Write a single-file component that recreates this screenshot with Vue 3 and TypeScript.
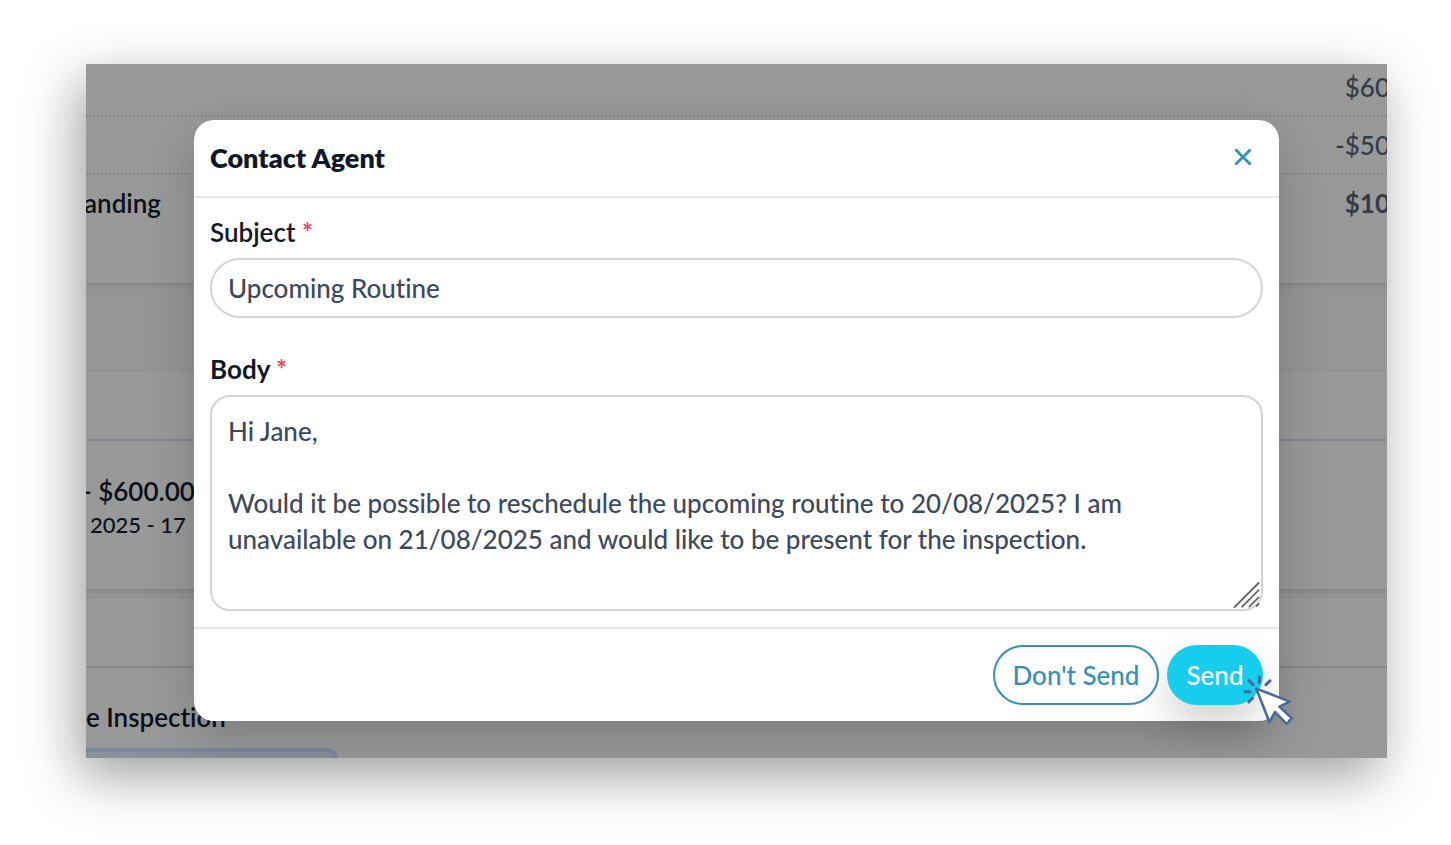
<script setup lang="ts">
import { ref } from 'vue'

const open = ref(true)
const subject = ref('Upcoming Routine')
const message = ref(
  'Hi Jane,\n\nWould it be possible to reschedule the upcoming routine to 20/08/2025? I am unavailable on 21/08/2025 and would like to be present for the inspection.',
)

const close = () => {
  open.value = false
}
</script>

<template>
  <main class="page">
    <div class="frame">
      <div class="backdrop">
        <section class="card">
          <div class="line first"><span></span><span class="amount">$60</span></div>
          <div class="line"><span></span><span class="amount">-$50</span></div>
          <div class="line total"><span class="name">anding</span><span class="amount strong">$10</span></div>
        </section>
        <div class="gap"></div>
        <section class="card">
          <div class="card-head"></div>
          <div class="invoice">
            <p class="invoice-title">- $600.00</p>
            <p class="invoice-dates">2025 - 17</p>
          </div>
        </section>
        <div class="gap small"></div>
        <section class="card last">
          <div class="card-head"></div>
          <p class="event">e Inspection</p>
          <div class="tag"></div>
        </section>
      </div>

      <form v-if="open" class="dialog" role="dialog" aria-labelledby="dialog-title" @submit.prevent="close">
        <header class="head">
          <h1 id="dialog-title" class="title">Contact Agent</h1>
          <button type="button" class="close" aria-label="Close" @click="close">
            <svg width="20" height="20" viewBox="0 0 20 20" aria-hidden="true">
              <path d="M3.2 2.2 16.8 15.8M16.8 2.2 3.2 15.8" fill="none" stroke="#3490b7" stroke-width="2.8" stroke-linecap="round" />
            </svg>
          </button>
        </header>

        <div class="fields">
          <div class="field">
            <label class="label" for="subject">Subject <span class="star">*</span></label>
            <input id="subject" v-model="subject" class="control" type="text" required />
          </div>
          <div class="field">
            <label class="label bold" for="message">Body <span class="star">*</span></label>
            <div class="area">
              <textarea id="message" v-model="message" class="control multi" rows="5" required></textarea>
              <svg class="grip" width="30" height="30" viewBox="0 0 30 30" aria-hidden="true">
                <path d="M2.6 27 26.6 3M10 26.8 26.6 10.2M17.4 26.6 26.6 17.4M24.6 26 26.6 24" fill="none" stroke="#666" stroke-width="1.8" stroke-linecap="round" />
              </svg>
            </div>
          </div>
        </div>

        <footer class="foot">
          <button type="button" class="btn outline" @click="close">Don't Send</button>
          <div class="send">
            <button type="submit" class="btn solid">Send</button>
            <svg class="cursor" width="56" height="56" viewBox="0 0 56 56" aria-hidden="true">
              <g stroke="#4a6a9b" stroke-linejoin="round" stroke-linecap="round">
                <path d="M16.3 16.6 49.6 29.6 39.4 34.6 51.8 46.2 46.6 51.8 35 40 29.4 50Z" fill="#fff" stroke-width="2.6" />
                <path d="M19.4 5V10.4M9 8.6 13 12.6M4.8 19.8H10M8.8 30 12.6 26M26 12.6 30 8.8" fill="none" stroke-width="3" />
              </g>
            </svg>
          </div>
        </footer>
      </form>
    </div>
  </main>
</template>

<style>
body {
  margin: 0;
  background: #fff;
}
</style>

<style scoped>
.page {
  box-sizing: border-box;
  padding: 64px 64px 86px 86px;
  color: #111827;
  font: 500 26px/36px Lato, 'Open Sans', sans-serif;
  font-variant-ligatures: none;
}

.frame {
  display: grid;
  overflow: hidden;
  background: #999;
  box-shadow: -8px 18px 50px rgba(0, 0, 0, 0.38);
}

.backdrop,
.dialog {
  grid-area: 1 / 1;
  min-width: 0;
}

.backdrop {
  display: flex;
  flex-direction: column;
}

.card {
  position: relative;
  background: #999;
  box-shadow: 0 2px 6px rgba(0, 0, 0, 0.14);
}

.card.last {
  display: flex;
  flex: 1;
  flex-direction: column;
}

.line {
  display: flex;
  justify-content: space-between;
  box-sizing: border-box;
  height: 58px;
  padding-top: 10px;
  border-bottom: 2px dotted #868693;
}

.line.first {
  height: 53px;
  padding-top: 5px;
}

.line.total {
  height: 108px;
  border-bottom: 0;
}

.name {
  margin-left: -2px;
  font-weight: 600;
  color: #0b101b;
}

.amount {
  margin-right: -3px;
  color: #343b47;
}

.strong {
  font-weight: 700;
}

.gap {
  height: 88px;
  background: #959696;
}

.gap.small {
  height: 9px;
}

.card-head {
  height: 68px;
  border-bottom: 2px solid #86878d;
}

.invoice {
  height: 116px;
  padding-top: 32px;
  color: #0b101b;
}

.invoice-title,
.invoice-dates,
.event {
  margin: 0;
  white-space: nowrap;
}

.invoice-title {
  margin-left: -4px;
  font-weight: 600;
}

.invoice-dates {
  padding-left: 4px;
  font-size: 22px;
  line-height: 32px;
}

.event {
  padding-top: 31px;
  font-weight: 600;
  color: #0b101b;
}

.tag {
  flex: 1;
  box-sizing: border-box;
  width: 252px;
  margin-top: 13px;
  border: solid #7d869a;
  border-width: 4px 4px 0 0;
  border-radius: 0 20px 0 0;
  background: #8c9099;
}

.dialog {
  position: relative;
  margin: 56px 108px 37px;
  border-radius: 20px;
  background: #fff;
  box-shadow: 0 16px 50px rgba(0, 0, 0, 0.2);
}

.head {
  display: flex;
  align-items: center;
  justify-content: space-between;
  padding: 20px 16px;
  border-bottom: 2px solid #e5e7eb;
}

.title {
  margin: 0;
  font-size: 27px;
  font-weight: 800;
  line-height: 36px;
}

.close {
  display: flex;
  padding: 8px 10px;
  border: 0;
  background: none;
  cursor: pointer;
}

.fields {
  display: grid;
  gap: 33px;
  padding: 16px;
}

.field {
  display: grid;
  gap: 8px;
}

.label {
  font-weight: 600;
}

.label.bold {
  font-weight: 700;
}

.star {
  font-weight: 700;
  color: #e5485d;
}

.control {
  display: block;
  box-sizing: border-box;
  width: 100%;
  height: 60px;
  margin: 0;
  padding: 0 16px;
  border: 2px solid #d1d5db;
  border-radius: 30px;
  outline: 0;
  background: #fff;
  color: #3d495c;
  font: inherit;
  font-variant-ligatures: none;
}

.control.multi {
  height: auto;
  padding: 16px;
  border-radius: 20px;
  resize: none;
  overflow: hidden;
}

.area,
.send {
  position: relative;
}

.grip {
  position: absolute;
  right: 1px;
  bottom: 1px;
}

.foot {
  display: flex;
  justify-content: flex-end;
  gap: 8px;
  padding: 16px;
  border-top: 2px solid #e5e7eb;
}

.btn {
  box-sizing: border-box;
  height: 60px;
  padding: 0 16px;
  border: 2px solid #3490b7;
  border-radius: 30px;
  background: #fff;
  color: #3490b7;
  font: inherit;
  cursor: pointer;
}

.outline {
  min-width: 166px;
}

.solid {
  display: block;
  min-width: 96px;
  border-color: #17cdee;
  background: #17cdee;
  color: #fff;
  box-shadow: 0 20px 40px rgba(0, 0, 0, 0.18);
}

.cursor {
  position: absolute;
  right: -33px;
  bottom: -23px;
  pointer-events: none;
}
</style>
